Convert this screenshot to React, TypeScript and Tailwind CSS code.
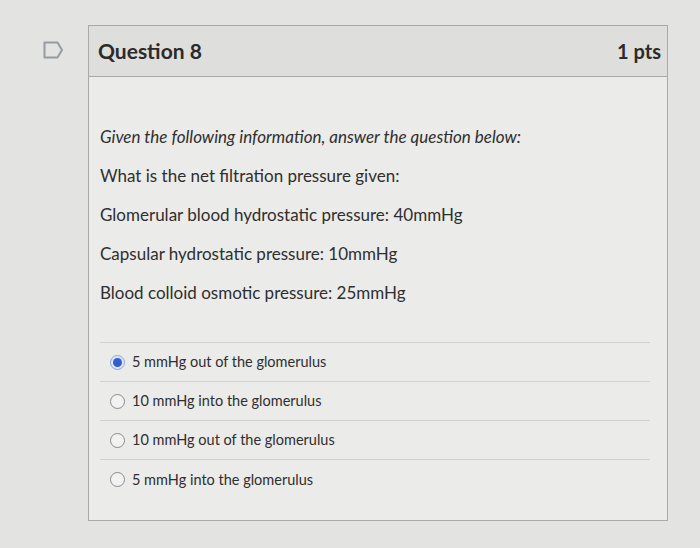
import React from 'react';

const answers = [
  { text: '5 mmHg out of the glomerulus', checked: true },
  { text: '10 mmHg into the glomerulus', checked: false },
  { text: '10 mmHg out of the glomerulus', checked: false },
  { text: '5 mmHg into the glomerulus', checked: false },
];

const Radio: React.FC<{ checked: boolean }> = ({ checked }) => (
  <span
    className={
      'w-[15px] h-[15px] rounded-full border flex items-center justify-center shrink-0 ' +
      (checked ? 'border-[#8fa6d8] bg-[#dfe6f5]' : 'border-[#8a8a8a] bg-[#f2f2f2]')
    }
  >
    {checked && <span className="w-[9px] h-[9px] rounded-full bg-[#2f5fd0]" />}
  </span>
);

const App: React.FC = () => {
  return (
    <div
      className="w-[700px] h-[548px] bg-[#e3e3e1] flex pt-[25px] pl-[40px] text-[#2d3b45]"
      style={{ fontFamily: 'Lato, "Open Sans", sans-serif' }}
    >
      <div className="w-[48px] pt-[16px] pl-[3px]">
        <svg width="21" height="18" viewBox="0 0 21 18" fill="none">
          <path d="M1.5 1.5h13l4.5 7.5-4.5 7.5h-13z" stroke="#959ba0" strokeWidth="2" strokeLinejoin="round" />
        </svg>
      </div>

      <div className="w-[580px] h-[496px] border border-[#a9a9a9] bg-[#ebebe9] flex flex-col">
        <div className="h-[51px] bg-[#dededc] border-b border-[#a9a9a9] flex items-center justify-between pl-[9px] pr-[6px]">
          <span className="text-[21px] font-bold text-[#2b2b2b]">Question 8</span>
          <span className="text-[20px] font-bold text-[#2b2b2b]">1 pts</span>
        </div>

        <div className="pl-[11px] pr-[17px] pt-[49px] text-[#2f2f2f]">
          <div className="flex flex-col gap-[17px] text-[17px] leading-[22px]">
            <p className="italic">Given the following information, answer the question below:</p>
            <p>What is the net filtration pressure given:</p>
            <p>Glomerular blood hydrostatic pressure: 40mmHg</p>
            <p>Capsular hydrostatic pressure: 10mmHg</p>
            <p>Blood colloid osmotic pressure: 25mmHg</p>
          </div>

          <div className="mt-[38px] border-t border-[#d2d2d0]">
            {answers.map((a, i) => (
              <div
                key={a.text}
                className={
                  'h-[39px] flex items-center gap-[7px] pl-[10px] text-[14.5px] ' +
                  (i < answers.length - 1 ? 'border-b border-[#d2d2d0]' : '')
                }
              >
                <Radio checked={a.checked} />
                <span>{a.text}</span>
              </div>
            ))}
          </div>
        </div>
      </div>
    </div>
  );
};

export default App;
